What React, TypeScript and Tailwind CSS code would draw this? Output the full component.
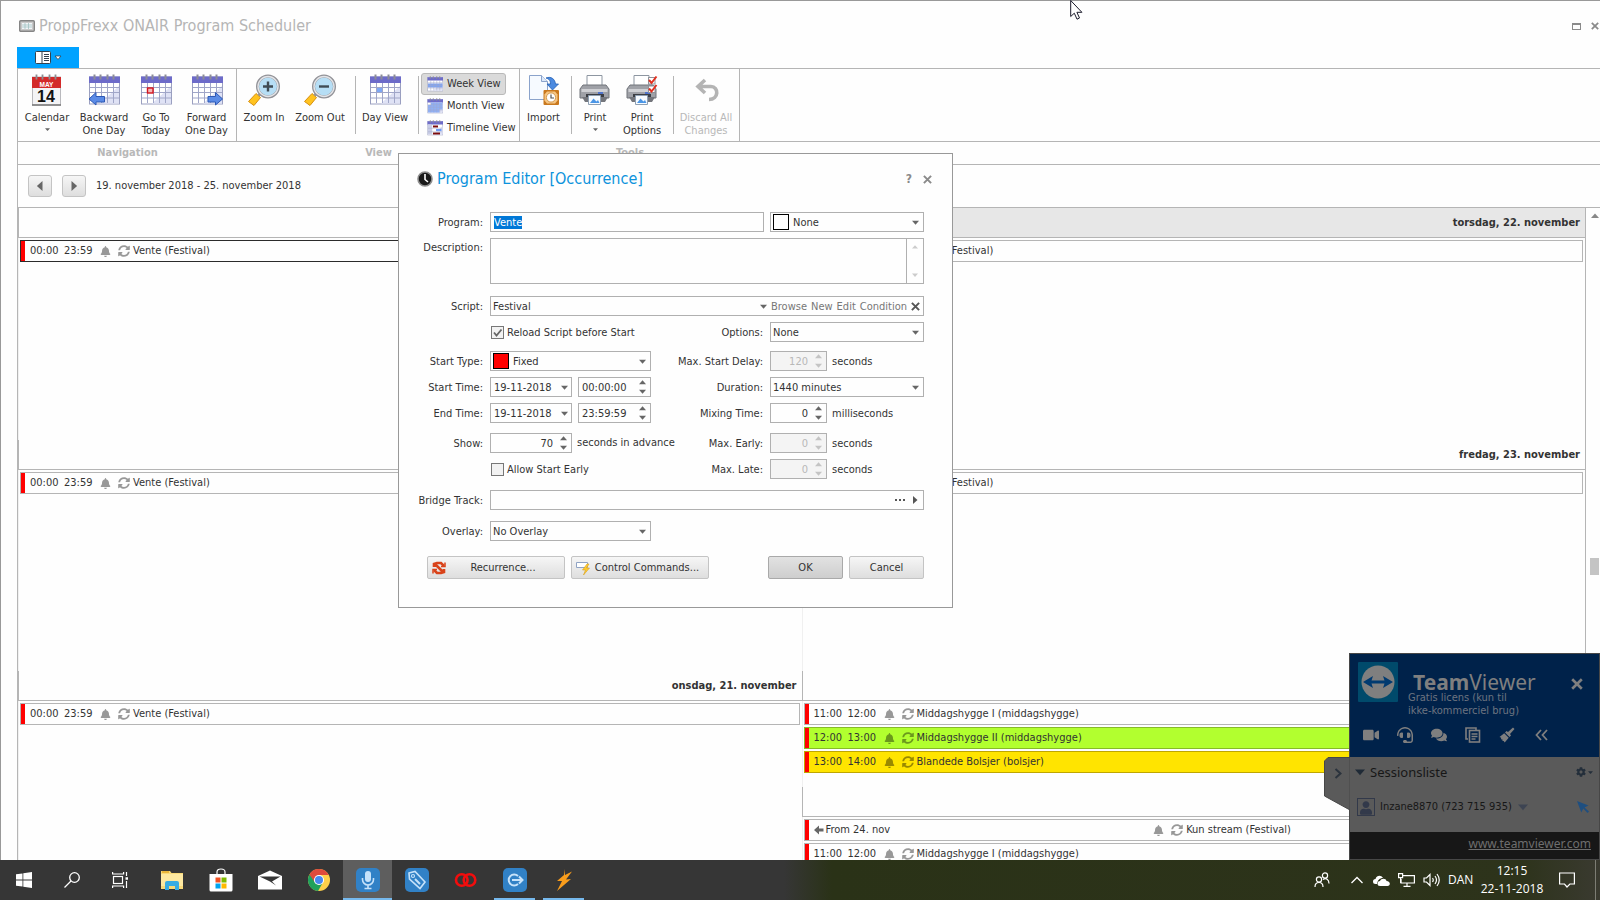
import React, { useEffect, useRef } from 'react';
import { FaBell, FaSyncAlt, FaVideo, FaHeadset, FaComments, FaCog, FaUser } from 'react-icons/fa';

type IconProps = { className?: string };

/* ---------- small glyphs ---------- */

const Caret: React.FC<{ dir?: 'up' | 'down' | 'left' | 'right'; className?: string }> = ({ dir = 'down', className = 'w-[7px] text-[#666]' }) => {
    const points = {
        down: '0,2 8,2 4,6.5',
        up: '0,6 8,6 4,1.5',
        left: '6,0 6,8 1.5,4',
        right: '2,0 2,8 6.5,4',
    };
    return (
        <svg viewBox="0 0 8 8" className={`shrink-0 ${className}`} fill="currentColor">
            <polygon points={points[dir]} />
        </svg>
    );
};

const Cross: React.FC<IconProps> = ({ className = '' }) => (
    <svg viewBox="0 0 10 10" className={`shrink-0 ${className}`} stroke="currentColor" strokeWidth="2.2">
        <path d="M1 1l8 8M9 1l-8 8" />
    </svg>
);

/* ---------- ribbon icons ---------- */

type CalendarKind = 'back' | 'today' | 'forward' | 'day' | 'week' | 'month' | 'timeline';

const CalendarIcon: React.FC<{ kind: CalendarKind; className?: string }> = ({ kind, className = 'w-8 h-8' }) => (
    <svg viewBox="0 0 32 32" className={`shrink-0 ${className}`}>
        <rect x="1.5" y="3" width="30" height="27" fill="#fff" stroke="#9a9fc0" />
        <path d="M12 29.5h19V12z" fill="#dfe2f5" />
        <rect x="1" y="2.5" width="31" height="6.5" fill="#6d6bc9" />
        {kind === 'timeline' ? (
            <g>
                <rect x="2" y="9" width="7" height="20" fill="#c9cde6" />
                <rect x="12" y="11" width="10" height="4" fill="#7d0d0d" />
                <rect x="18" y="18" width="11" height="4" fill="#6f9bf5" />
                <rect x="12" y="25" width="14" height="4" fill="#7d0d0d" />
                <path d="M9.500 9v20M2 16.500h28M2 23.500h28" stroke="#a3a8c8" />
            </g>
        ) : (
            <g>
                {kind === 'day' && <rect x="8" y="14" width="5" height="4.5" fill="#7fa8f5" />}
                {kind === 'week' && <rect x="2" y="15" width="29" height="8" fill="#7fa4f2" />}
                {kind === 'month' && <path d="M8 9h23v14h-6v6H2V14h6z" fill="#8fb0f5" />}
                <path d="M7.500 9v20M13.500 9v20M19.500 9v20M25.500 9v20M2 13.500h29M2 18.500h29M2 24h29" stroke="#a0a6c8" />
            </g>
        )}
        {kind === 'today' && <rect x="7.5" y="14" width="5.5" height="5" fill="#f3b9b9" stroke="#d4141c" strokeWidth="1.4" />}
        {kind === 'back' && <path d="M1 25l7-6.5v4h8.500V28H8v3z" fill="#5b8be6" stroke="#2d58b5" />}
        {kind === 'forward' && <path d="M31.500 25l-7-6.500v4H17V28h7.500v3z" fill="#5b8be6" stroke="#2d58b5" />}
        <path d="M6.500 .5v5M12.500 .5v5M19.500 .5v5M25.500 .5v5" stroke="#8b8b97" strokeWidth="2" />
    </svg>
);

const MayIcon = () => (
    <svg viewBox="0 0 32 32" className="w-8 h-8 shrink-0">
        <rect x="1.5" y="3" width="28" height="28" fill="#f4f4f6" stroke="#b9b9bd" />
        <rect x="1" y="3" width="29" height="11" fill="#d32a2a" />
        <path d="M1 31h29" stroke="#777" strokeWidth="1.5" />
        <path d="M5.500 .5v5M11.500 .5v5M18.500 .5v5M24.500 .5v5" stroke="#8d8d92" strokeWidth="1.8" />
        <text x="15.5" y="12.500" fontSize="6.5" fontWeight="700" textAnchor="middle" fill="#fff" fontFamily="Liberation Sans">MAY</text>
        <text x="15" y="28" fontSize="16" fontWeight="700" textAnchor="middle" fill="#111" fontFamily="Liberation Sans">14</text>
    </svg>
);

const ZoomIcon: React.FC<{ plus?: boolean }> = ({ plus }) => (
    <svg viewBox="0 0 32 32" className="w-8 h-8 shrink-0">
        <path d="M8 19.500l4.500 4-6.500 8-5.500-4z" fill="#ffc31f" stroke="#d68f10" />
        <path d="M10.500 21.500l3-3" stroke="#9a9a9a" strokeWidth="3" />
        <circle cx="20" cy="12.5" r="10.5" fill="#b6def5" stroke="#929297" strokeWidth="3" />
        <circle cx="20" cy="12.5" r="10" fill="none" stroke="#e2e4e8" strokeWidth="1.4" />
        <path d={plus ? 'M15 12.500h10M20 7.500v10' : 'M15 12.500h10'} stroke="#3f4b54" strokeWidth="2.4" />
    </svg>
);

const ImportIcon = () => (
    <svg viewBox="0 0 32 32" className="w-8 h-8 shrink-0">
        <path d="M1.500 1.500h12l6 6v18h-18z" fill="#f6faff" stroke="#8ba3cb" />
        <path d="M13.500 1.500v6h6" fill="#dbe8fa" stroke="#8ba3cb" />
        <path d="M18 4c5-2 9 1 9.500 6h3l-6 6-5.500-6h3.500c0-3-1-5-4.500-6z" fill="#4b8ae0" stroke="#2461b4" strokeWidth=".8" />
        <rect x="15.5" y="16" width="15.500" height="15" rx="1" fill="#c9781d" />
        <path d="M19 17.500h8l2.500 3v6l-2.500 3h-8l-2.500-3v-6z" fill="#f5c583" />
        <circle cx="23" cy="23.5" r="4.6" fill="#fff" stroke="#d59a50" />
        <path d="M23 20.500V24h3" stroke="#555" fill="none" strokeWidth="1.2" />
    </svg>
);

const PrintIcon: React.FC<{ options?: boolean }> = ({ options }) => (
    <svg viewBox="0 0 32 32" className="w-8 h-8 shrink-0">
        <path d="M8 12V1.500h15V12z" fill="#fff" stroke="#8d96a1" />
        <path d="M4 11h23l3 4v9H1v-9z" fill="#9fa1a7" stroke="#71747b" />
        <path d="M2.500 15h26v3h-26z" fill="#cfd0d4" />
        <path d="M3 23h26l-3 5H6z" fill="#74767c" />
        <path d="M7 20h18v3H7z" fill="#3c3e44" />
        <path d="M9.500 21.500h12v9h-12z" fill="#f7fbff" stroke="#8fa0b3" />
        <path d="M11 29l3.500-4.500 3 3 1.500-1.500 1.500 3z" fill="#4b96e6" />
        <path d="M19 19h5" stroke="#3565d6" strokeWidth="1.5" />
        {options && (
            <g>
                <rect x="22.5" y="3.5" width="6.5" height="6.5" fill="#fff" stroke="#8f9299" />
                <rect x="22.5" y="12" width="6.5" height="6.5" fill="#fff" stroke="#8f9299" />
                <path d="M23 6l2.500 3L30.500 2.500M23 14.500l2.500 3 5-6.500" stroke="#e2301f" strokeWidth="2" fill="none" />
            </g>
        )}
    </svg>
);

const UndoIcon = () => (
    <svg viewBox="0 0 32 32" className="w-8 h-8 shrink-0">
        <path d="M15 6L8 12.500l7 6.500M9 12.500h12c8 0 8 13-2 13" fill="none" stroke="#b4b4b4" strokeWidth="3.6" />
    </svg>
);

/* ---------- ribbon ---------- */

interface RibbonItemProps {
    icon: React.ReactNode;
    lines: string[];
    width: string;
    menu?: boolean;
    disabled?: boolean;
}

const RibbonItem: React.FC<RibbonItemProps> = ({ icon, lines, width, menu, disabled }) => (
    <button disabled={disabled} className={`${width} shrink-0 flex flex-col items-center pt-[5px] leading-[13px] ${disabled ? 'text-[#b8b8b8]' : ''}`}>
        {icon}
        <span className="mt-[5px]">
            {lines.map(line => <span key={line} className="block whitespace-nowrap">{line}</span>)}
        </span>
        {menu && <Caret className="w-[5px] mt-[3px] text-[#666]" />}
    </button>
);

const Divider: React.FC<IconProps> = ({ className = '' }) => <div className={`w-px shrink-0 my-[7px] bg-[#b5b5b5] ${className}`} />;

const ViewItem: React.FC<{ kind: CalendarKind; label: string; active?: boolean }> = ({ kind, label, active }) => (
    <button className={`h-[22px] pl-[5px] pr-1 flex items-center gap-1 whitespace-nowrap rounded-[3px] border ${active ? 'bg-[#dadada] border-[#b9b9b9]' : 'border-transparent'}`}>
        <CalendarIcon kind={kind} className="w-4 h-4" />
        {label}
    </button>
);

const RibbonGroup: React.FC<{ caption: string; width: string; children: React.ReactNode }> = ({ caption, width, children }) => (
    <section className={`${width} shrink-0`}>
        <div className="h-[72px] flex border-r border-[#b5b5b5]">{children}</div>
        <h2 className="h-[23px] pt-1 text-center font-bold text-[#b8b8b8]">{caption}</h2>
    </section>
);

const Ribbon = () => (
    <div className="ml-4 shrink-0">
        <button className="w-[62px] h-[21px] bg-[#00a2ff] flex items-center justify-center gap-[3px]" aria-label="File">
            <svg viewBox="0 0 16 13" className="w-4 h-[13px]">
                <rect x=".5" y=".5" width="15" height="12" rx="1" fill="#fff" stroke="#33424e" />
                <path d="M7 0v13" stroke="#33424e" />
                <path d="M9 3.500h5M9 5.500h5M9 7.500h5M9 9.500h5" stroke="#33424e" />
            </svg>
            <svg viewBox="0 0 8 6" className="w-2 h-1.5">
                <path d="M1 1h6L4 4.500z" fill="#fff" stroke="#33424e" strokeWidth=".8" />
            </svg>
        </button>
        <div className="relative border-t border-l border-[#b5b5b5]">
            <div className="absolute left-0 right-0 top-[72px] h-px bg-[#b5b5b5]" />
            <div className="flex">
                <RibbonGroup caption="Navigation" width="w-[219px]">
                    <RibbonItem width="w-[58px]" icon={<MayIcon />} lines={['Calendar']} menu />
                    <RibbonItem width="w-14" icon={<CalendarIcon kind="back" />} lines={['Backward', 'One Day']} />
                    <RibbonItem width="w-12" icon={<CalendarIcon kind="today" />} lines={['Go To', 'Today']} />
                    <RibbonItem width="w-[53px]" icon={<CalendarIcon kind="forward" />} lines={['Forward', 'One Day']} />
                </RibbonGroup>
                <RibbonGroup caption="View" width="w-[283px]">
                    <RibbonItem width="w-[54px]" icon={<ZoomIcon plus />} lines={['Zoom In']} />
                    <RibbonItem width="w-[58px]" icon={<ZoomIcon />} lines={['Zoom Out']} />
                    <Divider className="ml-1.5" />
                    <RibbonItem width="w-[58px]" icon={<CalendarIcon kind="day" />} lines={['Day View']} />
                    <Divider className="ml-1" />
                    <div className="pl-0.5 pt-1 flex flex-col items-start">
                        <ViewItem kind="week" label="Week View" active />
                        <ViewItem kind="month" label="Month View" />
                        <ViewItem kind="timeline" label="Timeline View" />
                    </div>
                </RibbonGroup>
                <RibbonGroup caption="Tools" width="w-[220px]">
                    <RibbonItem width="w-[47px]" icon={<ImportIcon />} lines={['Import']} />
                    <Divider className="ml-1" />
                    <RibbonItem width="w-[46px]" icon={<PrintIcon />} lines={['Print']} menu />
                    <RibbonItem width="w-12" icon={<PrintIcon options />} lines={['Print', 'Options']} />
                    <Divider className="ml-[7px]" />
                    <RibbonItem width="w-[64px]" icon={<UndoIcon />} lines={['Discard All', 'Changes']} disabled />
                </RibbonGroup>
            </div>
        </div>
    </div>
);

/* ---------- calendar ---------- */

interface Appointment {
    start?: string;
    end?: string;
    from?: string;
    title: string;
    tone?: 'plain' | 'green' | 'yellow' | 'selected';
}

const tones = {
    plain: 'border-[#b5b5b5]',
    selected: 'border-[#2b2b2b]',
    green: 'border-[#86bb27] bg-[#b2ff2f]',
    yellow: 'border-[#bfa600] bg-[#ffe400]',
};

const Marks: React.FC<{ title: string }> = ({ title }) => (
    <>
        <FaBell className="w-[11px] h-[11px] text-black/40" />
        <FaSyncAlt className="w-3 h-3 ml-[7px] mr-[3px] text-black/40" />
        <span>{title}</span>
    </>
);

const AppointmentRow: React.FC<Appointment> = ({ start, end, from, title, tone = 'plain' }) => (
    <div className={`h-[22px] shrink-0 flex items-center border whitespace-nowrap ${tones[tone]}`}>
        <div className="w-1 self-stretch bg-[#f00] mr-[5px]" />
        {from ? (
            <>
                <svg viewBox="0 0 10 10" className="w-2.5 h-2.5 mr-0.5" fill="#666"><path d="M0 5l5-4.500v3h4.500v3H5v3z" /></svg>
                <span>{from}</span>
                <div className="flex-1 flex items-center justify-center pr-7"><Marks title={title} /></div>
            </>
        ) : (
            <>
                <span className="w-[34px]">{start}</span>
                <span className="w-9">{end}</span>
                <Marks title={title} />
            </>
        )}
    </div>
);

interface DayProps {
    label?: string;
    height: string;
    today?: boolean;
    items: Appointment[];
}

const DayCell: React.FC<DayProps> = ({ label, height, today, items }) => (
    <section className={`${height} shrink-0 flex flex-col overflow-hidden`}>
        <div className={`h-[30px] shrink-0 border-b border-l border-[#b5b5b5] pr-[5px] flex items-center justify-end ${today ? 'bg-[#e7e7e7]' : ''}`}>
            {label && <h3 className="font-bold">{label}</h3>}
        </div>
        <div className="flex-1 pt-0.5 pl-px pr-0.5 flex flex-col gap-0.5 border-l border-[#f0f0f0]">
            {items.map((item, i) => <AppointmentRow key={i} {...item} />)}
        </div>
    </section>
);

const vente: Appointment = { start: '00:00', end: '23:59', title: 'Vente (Festival)' };
const hygge: Appointment = { start: '11:00', end: '12:00', title: 'Middagshygge I (middagshygge)' };

const leftDays: DayProps[] = [
    { height: 'h-[232px]', items: [{ ...vente, tone: 'selected' }] },
    { height: 'h-[231px]', items: [vente] },
    { label: 'onsdag, 21. november', height: 'h-[232px]', items: [vente] },
];

const rightDays: DayProps[] = [
    { label: 'torsdag, 22. november', height: 'h-[232px]', today: true, items: [vente] },
    { label: 'fredag, 23. november', height: 'h-[231px]', items: [vente] },
    {
        height: 'h-[116px]',
        items: [
            hygge,
            { start: '12:00', end: '13:00', title: 'Middagshygge II (middagshygge)', tone: 'green' },
            { start: '13:00', end: '14:00', title: 'Blandede Bolsjer (bolsjer)', tone: 'yellow' },
        ],
    },
    { height: 'h-[116px]', items: [{ from: 'From 24. nov', title: 'Kun stream (Festival)' }, hygge] },
];

const NavButton: React.FC<{ dir: 'left' | 'right'; label: string }> = ({ dir, label }) => (
    <button aria-label={label} className="w-6 h-[22px] rounded-[3px] border border-[#c4c4c4] bg-linear-to-b from-[#f6f6f6] to-[#dedede] flex items-center justify-center">
        <Caret dir={dir} className="w-2.5 text-[#666]" />
    </button>
);

const Calendar = () => (
    <div className="ml-4 flex-1 min-h-0 flex flex-col border-t border-l border-[#b5b5b5]">
        <div className="h-[43px] shrink-0 flex items-center gap-2.5 pl-2.5 border-b border-[#b5b5b5]">
            <NavButton dir="left" label="Previous week" />
            <NavButton dir="right" label="Next week" />
            <span>19. november 2018 - 25. november 2018</span>
        </div>
        <div className="flex-1 min-h-0 flex overflow-hidden">
            <div className="flex-1 flex flex-col">{leftDays.map((day, i) => <DayCell key={i} {...day} />)}</div>
            <div className="flex-1 flex flex-col">{rightDays.map((day, i) => <DayCell key={i} {...day} />)}</div>
            <div className="w-[15px] shrink-0 border-l border-[#b5b5b5] flex flex-col items-end pt-1 pr-px">
                <Caret dir="up" className="w-2 text-[#888]" />
                <div className="mt-[338px] w-[9px] h-[17px] bg-[#c4c4c4]" />
            </div>
        </div>
    </div>
);

/* ---------- program editor ---------- */

const box = 'h-5 border border-[#b0b0b0] flex items-center';

const Label: React.FC<{ htmlFor: string; right?: boolean; children: React.ReactNode }> = ({ htmlFor, right, children }) => (
    <label htmlFor={htmlFor} className={`shrink-0 pt-0.5 text-right mr-[7px] whitespace-nowrap ${right ? 'w-28' : 'w-[76px]'}`}>{children}</label>
);

const Unit: React.FC<{ children: React.ReactNode }> = ({ children }) => <span className="ml-[5px] pt-0.5 whitespace-nowrap">{children}</span>;

const Combo: React.FC<{ id: string; value: string; width: string; swatch?: string; label?: string }> = ({ id, value, width, swatch, label }) => (
    <div className={`${box} ${width} pl-0.5 pr-1 shrink-0`}>
        {swatch && <span className={`w-4 h-4 shrink-0 border border-black mr-1 ${swatch}`} />}
        <select id={id} aria-label={label} defaultValue={value} className="flex-1 min-w-0 pt-0.5 appearance-none bg-transparent outline-none">
            <option>{value}</option>
        </select>
        <Caret />
    </div>
);

const Spin: React.FC<{ id: string; value: string; width: string; disabled?: boolean; alignRight?: boolean; label?: string }> = ({ id, value, width, disabled, alignRight, label }) => (
    <div className={`${box} ${width} pl-[3px] pr-1 shrink-0 ${disabled ? 'bg-[#f4f4f4] text-[#b8b8b8]' : ''}`}>
        <input id={id} aria-label={label} defaultValue={value} disabled={disabled} className={`flex-1 min-w-0 pt-0.5 outline-none ${alignRight ? 'text-right mr-[7px]' : ''}`} />
        <span className={`flex flex-col gap-0.5 ${disabled ? 'text-[#c4c4c4]' : 'text-[#666]'}`}>
            <Caret dir="up" className="w-[7px]" />
            <Caret className="w-[7px]" />
        </span>
    </div>
);

const DateBox: React.FC<{ id: string }> = ({ id }) => (
    <div className={`${box} w-[82px] pl-[3px] pr-[3px] mr-1.5 shrink-0`}>
        <input id={id} defaultValue="19-11-2018" className="flex-1 min-w-0 pt-0.5 outline-none" />
        <Caret />
    </div>
);

const Check: React.FC<{ label: string; checked?: boolean }> = ({ label, checked }) => (
    <label className="w-40 shrink-0 ml-[84px] flex items-center gap-[3px] whitespace-nowrap">
        <span className="relative flex shrink-0">
            <input type="checkbox" defaultChecked={checked} className="peer appearance-none w-[13px] h-[13px] border border-[#777] bg-[#f2f2f2]" />
            <svg viewBox="0 0 13 13" className="absolute inset-0 hidden peer-checked:block" fill="none" stroke="#666" strokeWidth="1.8">
                <path d="M3 6.500l2.500 3 5-6" />
            </svg>
        </span>
        <span className="pt-0.5">{label}</span>
    </label>
);

const DialogButton: React.FC<{ width: string; icon?: React.ReactNode; primary?: boolean; children: React.ReactNode }> = ({ width, icon, primary, children }) => (
    <button className={`${width} h-[23px] shrink-0 rounded-[2px] border px-1 flex items-center bg-linear-to-b ${primary ? 'border-[#a9a9a9] from-[#e2e2e2] to-[#cecece]' : 'border-[#c4c4c4] from-[#f6f6f6] to-[#dedede]'}`}>
        {icon}
        <span className="flex-1 pt-px text-center">{children}</span>
    </button>
);

const ProgramEditor = () => {
    const programRef = useRef<HTMLInputElement>(null);

    // The name is preselected so it can be typed over
    useEffect(() => {
        programRef.current?.focus();
        programRef.current?.select();
    }, []);

    return (
        <div role="dialog" aria-label="Program Editor" className="absolute left-[398px] top-[153px] w-[555px] pl-2 pr-5 pb-7 bg-[#fefefe] border border-[#999]">
            <header className="h-[50px] ml-2.5 flex items-center">
                <svg viewBox="0 0 16 16" className="w-4 h-4 mr-1">
                    <circle cx="8" cy="8" r="7" fill="#1a1a1a" stroke="#8d8d8d" strokeWidth="1.6" />
                    <path d="M8 3v5.500l3 2.500" stroke="#fff" strokeWidth="1.6" fill="none" />
                </svg>
                <h1 className="flex-1 text-[16px] text-[#0c93dc]">Program Editor [Occurrence]</h1>
                <button className="font-bold text-[12px] text-[#8a8a8a] mr-[11px]" aria-label="Help">?</button>
                <button aria-label="Close"><Cross className="w-[9px] text-[#8a8a8a]" /></button>
            </header>

            <div className="mt-2 flex items-center">
                <Label htmlFor="program">Program:</Label>
                <input id="program" ref={programRef} defaultValue="Vente" className="w-[274px] h-5 mr-1.5 px-[3px] pt-px border border-[#b0b0b0] outline-none selection:bg-[#0078d7] selection:text-white" />
                <Combo id="color" label="Color" value="None" width="w-[154px]" swatch="bg-white" />
            </div>
            <div className="mt-1.5 flex items-start">
                <Label htmlFor="description">Description:</Label>
                <div className="w-[434px] h-[46px] border border-[#b0b0b0] flex">
                    <textarea id="description" className="flex-1 resize-none outline-none" />
                    <div className="w-[17px] border-l border-[#b0b0b0] py-[5px] flex flex-col items-center justify-between text-[#ccc]">
                        <Caret dir="up" className="w-1.5" />
                        <Caret className="w-1.5" />
                    </div>
                </div>
            </div>
            <div className="mt-3 flex items-center">
                <Label htmlFor="script">Script:</Label>
                <div className={`${box} w-[434px] pl-0.5 pr-[3px]`}>
                    <select id="script" className="flex-1 pt-0.5 appearance-none outline-none"><option>Festival</option></select>
                    <Caret />
                    <div className="ml-1 flex items-center gap-1 text-[#777]">
                        <button className="pt-0.5">Browse</button>
                        <button className="pt-0.5">New</button>
                        <button className="pt-0.5">Edit</button>
                        <button className="pt-0.5">Condition</button>
                        <button aria-label="Clear"><Cross className="w-[9px] text-[#555]" /></button>
                    </div>
                </div>
            </div>
            <div className="mt-1.5 flex items-center">
                <Check label="Reload Script before Start" checked />
                <Label htmlFor="options" right>Options:</Label>
                <Combo id="options" value="None" width="w-[154px]" />
            </div>
            <div className="mt-[9px] flex items-center">
                <Label htmlFor="startType">Start Type:</Label>
                <Combo id="startType" value="Fixed" width="w-[161px]" swatch="bg-[#f00]" />
                <Label htmlFor="maxDelay" right>Max. Start Delay:</Label>
                <Spin id="maxDelay" value="120" width="w-[57px]" disabled alignRight />
                <Unit>seconds</Unit>
            </div>
            <div className="mt-1.5 flex items-center">
                <Label htmlFor="startDate">Start Time:</Label>
                <DateBox id="startDate" />
                <Spin id="startTime" label="Start clock" value="00:00:00" width="w-[73px]" />
                <Label htmlFor="duration" right>Duration:</Label>
                <Combo id="duration" value="1440 minutes" width="w-[154px]" />
            </div>
            <div className="mt-1.5 flex items-center">
                <Label htmlFor="endDate">End Time:</Label>
                <DateBox id="endDate" />
                <Spin id="endTime" label="End clock" value="23:59:59" width="w-[73px]" />
                <Label htmlFor="mixing" right>Mixing Time:</Label>
                <Spin id="mixing" value="0" width="w-[57px]" alignRight />
                <Unit>milliseconds</Unit>
            </div>
            <div className="mt-2.5 flex items-center">
                <Label htmlFor="show">Show:</Label>
                <Spin id="show" value="70" width="w-[82px]" alignRight />
                <div className="w-[79px]"><Unit>seconds in advance</Unit></div>
                <Label htmlFor="maxEarly" right>Max. Early:</Label>
                <Spin id="maxEarly" value="0" width="w-[57px]" disabled alignRight />
                <Unit>seconds</Unit>
            </div>
            <div className="mt-1.5 flex items-center">
                <Check label="Allow Start Early" />
                <Label htmlFor="maxLate" right>Max. Late:</Label>
                <Spin id="maxLate" value="0" width="w-[57px]" disabled alignRight />
                <Unit>seconds</Unit>
            </div>
            <div className="mt-[11px] flex items-center">
                <Label htmlFor="bridge">Bridge Track:</Label>
                <div className={`${box} w-[434px] pr-1`}>
                    <input id="bridge" className="flex-1 outline-none" />
                    <button aria-label="Pick track" className="flex gap-0.5 mr-1.5">
                        <i className="size-0.5 bg-[#555]" /><i className="size-0.5 bg-[#555]" /><i className="size-0.5 bg-[#555]" />
                    </button>
                    <button aria-label="Play"><Caret dir="right" className="w-2 text-[#555]" /></button>
                </div>
            </div>
            <div className="mt-[11px] flex items-center">
                <Label htmlFor="overlay">Overlay:</Label>
                <Combo id="overlay" value="No Overlay" width="w-[161px]" />
            </div>
            <footer className="mt-[15px] ml-5 mr-2 flex gap-1.5">
                <DialogButton width="w-[138px]" icon={
                    <svg viewBox="0 0 14 14" className="w-3.5 h-3.5" fill="none" stroke="#d9431a" strokeWidth="2.6">
                        <path d="M2 6V3l3-1h4l3 3M12 8v3l-3 1H5L2 9M3 3l8 8" />
                        <path d="M9 5.500h4v-4M5 8.500H1v4" strokeWidth="1.5" />
                    </svg>
                }>Recurrence...</DialogButton>
                <DialogButton width="w-[138px]" icon={
                    <svg viewBox="0 0 14 14" className="w-3.5 h-3.5">
                        <path d="M.5 1.500h11v5H.5z" fill="#fff" stroke="#8fa3c4" />
                        <path d="M11 3L6.500 9h3l-2 5 6-7h-3l2.500-4z" fill="#ffcb30" stroke="#d9a11c" strokeWidth=".6" />
                    </svg>
                }>Control Commands...</DialogButton>
                <div className="flex-1" />
                <DialogButton width="w-[75px]" primary>OK</DialogButton>
                <DialogButton width="w-[75px]">Cancel</DialogButton>
            </footer>
        </div>
    );
};

/* ---------- TeamViewer panel ---------- */

const TeamViewer = () => (
    <aside className="absolute right-0 bottom-10 w-[251px] border border-[#474747]">
        <svg viewBox="0 0 26 54" className="absolute right-full top-[103px] w-[26px] h-[54px]">
            <path d="M26 .5H4L.5 4v35L26 53z" fill="#5a5a5a" stroke="#474747" />
            <path d="M11.500 12l5 4.500-5 4.500" fill="none" stroke="#2b333d" strokeWidth="2" />
        </svg>
        <div className="h-[103px] bg-[#00224a] text-[#7f7f7f] pt-2 px-2">
            <div className="h-[55px] flex">
                <svg viewBox="0 0 40 40" className="w-10 h-10 shrink-0">
                    <rect width="40" height="40" rx="1" fill="#004a6b" />
                    <circle cx="20" cy="20" r="16.5" fill="#7f7f7f" />
                    <path d="M5 20l10-6-1.500 4.500h13L25 14l10 6-10 6 1.500-4.500h-13L15 26z" fill="#003a70" />
                </svg>
                <div className="ml-2.5 flex-1">
                    <div className="pl-[5px] pt-3 text-[21px] leading-[17px] font-['Noto_Sans',sans-serif]"><b>Team</b>Viewer</div>
                    <p className="text-[11px] leading-[13px] text-[#6d7480]">Gratis licens (kun til<br />ikke-kommerciel brug)</p>
                </div>
                <button aria-label="Close panel" className="self-start mt-4 mr-2"><Cross className="w-3" /></button>
            </div>
            <div className="mt-2.5 ml-[5px] flex items-center gap-[18px] text-[16px]">
                <FaVideo />
                <FaHeadset />
                <FaComments />
                <svg viewBox="0 0 16 16" className="w-4 h-4" fill="none" stroke="currentColor" strokeWidth="1.6">
                    <path d="M3 12H1V1h10v2" /><rect x="4.5" y="3.5" width="10" height="11.5" /><path d="M6.500 7h6M6.500 9.500h6M6.500 12h4" />
                </svg>
                <svg viewBox="0 0 16 16" className="w-4 h-4" fill="currentColor">
                    <path d="M14 .5l1.500 1.500-4.500 5 1 1.500-1.500 1.500L6 5.500 7.500 4 9 5z" /><path d="M5.200 6.300l4.500 4.500-4 4.700-1-1.500-1.200 0 0-1.500-1.500-.3.200-1.500L.5 10z" />
                </svg>
                <svg viewBox="0 0 16 16" className="w-4 h-4" fill="none" stroke="currentColor" strokeWidth="1.8">
                    <path d="M8 3L3.500 8 8 13M14 3L9.500 8l4.500 5" />
                </svg>
            </div>
        </div>
        <div className="h-[75px] bg-[#5a5a5a] text-[#171717]">
            <div className="h-[30px] flex items-center pl-[5px] pr-1.5">
                <Caret className="w-2.5 text-[#1f2a36]" />
                <span className="flex-1 ml-[5px] text-[13px] font-['Noto_Sans',sans-serif]">Sessionsliste</span>
                <FaCog className="w-2.5 h-2.5 mr-0.5 text-[#232e3a]" />
                <Caret className="w-[5px] text-[#232e3a]" />
            </div>
            <div className="mt-[11px] flex items-center pl-[7px] pr-2.5">
                <span className="w-[18px] h-[18px] border border-[#32394a] flex items-end justify-center"><FaUser className="w-3 h-3.5 text-[#32394a]" /></span>
                <span className="ml-[5px]">Inzane8870 (723 715 935)</span>
                <Caret className="w-2.5 ml-1.5 text-[#3d4452]" />
                <svg viewBox="0 0 12 12" className="w-3 h-3 ml-auto" fill="#1f4f80"><path d="M0 0l11.500 4.500-4 2 4.500 4-1.500 1.500-4.200-4.500-2 4z" /></svg>
            </div>
        </div>
        <div className="h-[27px] bg-[#171717] text-right pr-2 pt-1 font-['Noto_Sans',sans-serif]">
            <a href="#teamviewer" className="text-[12px] text-[#6e6e6e] underline">www.teamviewer.com</a>
        </div>
    </aside>
);

/* ---------- taskbar ---------- */

const TaskButton: React.FC<{ label: string; state?: 'active' | 'running'; wide?: boolean; children: React.ReactNode }> = ({ label, state, wide = true, children }) => (
    <button aria-label={label} className={`${wide ? 'w-[49px]' : 'w-12'} h-10 relative flex items-center justify-center ${state === 'active' ? 'bg-[#5e5e5e]' : ''}`}>
        {children}
        {state && <span className={`absolute bottom-0 h-0.5 bg-[#76b9ed] ${state === 'active' ? 'inset-x-0' : 'inset-x-1'}`} />}
    </button>
);

const BlueTile: React.FC<{ children: React.ReactNode }> = ({ children }) => (
    <svg viewBox="0 0 24 24" className="w-6 h-6" fill="none" stroke="#c6e2fa" strokeWidth="2">
        <rect width="24" height="24" rx="5" fill="#3181c6" stroke="none" />
        {children}
    </svg>
);

const Taskbar = () => (
    <footer className="h-10 shrink-0 flex text-white bg-[linear-gradient(90deg,#363636_49%,#2a3217_52%,#2d331b_95%,#3a3a30)] font-['Open_Sans',sans-serif]">
        <TaskButton label="Start" wide={false}>
            <svg viewBox="0 0 16 16" className="w-4 h-4" fill="#fff">
                <path d="M0 2.300l6.500-.9v6.200H0zM7.300 1.300L16 0v7.600H7.300zM0 8.400h6.500v6.200L0 13.700zM7.300 8.400H16V16l-8.700-1.200z" />
            </svg>
        </TaskButton>
        <TaskButton label="Search" wide={false}>
            <svg viewBox="0 0 16 16" className="w-4 h-4" fill="none" stroke="#fff" strokeWidth="1.3">
                <circle cx="10.5" cy="5.5" r="4.8" /><path d="M7 9L.5 15.500" />
            </svg>
        </TaskButton>
        <TaskButton label="Task view" wide={false}>
            <svg viewBox="0 0 16 16" className="w-4 h-4" fill="none" stroke="#fff" strokeWidth="1.2">
                <rect x="1.5" y="4.5" width="9" height="7" /><path d="M.6 0v2h11V0M.6 16v-2h11v2M14.500 0v4M14.500 9v7" /><path d="M13.500 6.500H16" strokeWidth="2.5" />
            </svg>
        </TaskButton>
        <div className="w-[3px]" />
        <TaskButton label="File Explorer">
            <svg viewBox="0 0 22 20" className="w-[22px] h-5">
                <path d="M0 1h9l1.500 2H22v16H0z" fill="#f8d978" />
                <path d="M0 4h22v12H0z" fill="#fde8a0" /><path d="M1 1h7v2H1z" fill="#e9b53a" />
                <path d="M4 20v-7q0-2 2-2h10q2 0 2 2v7h-4v-4H8v4z" fill="#37ace3" />
            </svg>
        </TaskButton>
        <TaskButton label="Store">
            <svg viewBox="0 0 24 24" className="w-6 h-6">
                <path d="M8 7V4q0-3 4-3t4 3v3" fill="none" stroke="#fff" strokeWidth="1.2" />
                <path d="M.5 6h23v16q0 1.500-1.500 1.500H2Q.5 23.500.5 22z" fill="#fff" />
                <path d="M6.500 9.500h5v5h-5z" fill="#f25022" /><path d="M12.500 9.500h5v5h-5z" fill="#7fba00" />
                <path d="M6.500 15.500h5v5h-5z" fill="#00a4ef" /><path d="M12.500 15.500h5v5h-5z" fill="#ffb900" />
            </svg>
        </TaskButton>
        <TaskButton label="Mail">
            <svg viewBox="0 0 24 20" className="w-6 h-5">
                <path d="M0 6L12 .5 24 6v13.500H0z" fill="#fff" /><path d="M1.500 6.500h21L14 11.500l4 4-6-4z" fill="#363636" />
            </svg>
        </TaskButton>
        <TaskButton label="Chrome">
            <svg viewBox="0 0 24 24" className="w-[22px] h-[22px]">
                <circle cx="12" cy="12" r="12" fill="#fdd04a" />
                <path d="M12 12L1.600 6A12 12 0 0 0 11 24l5-9z" fill="#1fa15d" />
                <path d="M1.600 6a12 12 0 0 1 21 .5H12L7 14z" fill="#de4a3c" />
                <circle cx="12" cy="12" r="5.5" fill="#fff" /><circle cx="12" cy="12" r="4.4" fill="#4788f0" />
            </svg>
        </TaskButton>
        <TaskButton label="Voice" state="active">
            <BlueTile>
                <rect x="9" y="3" width="6" height="11" rx="3" fill="#c6e2fa" stroke="none" /><path d="M6.500 10v1.500a5.500 5.500 0 0 0 11 0V10M12 17v3M8.500 20.500h7" strokeWidth="1.6" />
            </BlueTile>
        </TaskButton>
        <TaskButton label="Tags">
            <BlueTile>
                <path d="M4 5l6-1.500L20 14l-5 6.500L4.500 11z" strokeWidth="1.6" /><circle cx="8" cy="8" r="1.5" strokeWidth="1.2" /><path d="M10 11l5 5" />
            </BlueTile>
        </TaskButton>
        <TaskButton label="Rings">
            <svg viewBox="0 0 24 16" className="w-6 h-4" fill="none" stroke="#f20d0d" strokeWidth="2.6">
                <circle cx="7.8" cy="8" r="5.8" /><circle cx="15.5" cy="8" r="5.8" />
            </svg>
        </TaskButton>
        <TaskButton label="Forward" state="running">
            <BlueTile><path d="M15 8a5.500 5.500 0 1 0 0 8M9 12h10M16 8.500l3.500 3.500-3.500 3.500" /></BlueTile>
        </TaskButton>
        <TaskButton label="Winamp" state="running">
            <svg viewBox="0 0 18 24" className="w-[18px] h-6">
                <path d="M9.500 1l-.5 6-7 6h5l-5 10L16 11l-5 .5 6-8L10 7z" fill="#f99d1c" />
            </svg>
        </TaskButton>

        <div className="ml-auto flex items-center">
            <svg viewBox="0 0 16 16" className="w-4 h-4 mr-[21px]" fill="none" stroke="#fff" strokeWidth="1.2">
                <circle cx="5" cy="7.5" r="2.6" /><path d="M1 15c0-6 8-6 8 0" /><circle cx="11" cy="3.5" r="2.6" /><path d="M9 7.500c3-2 6 0 6 4" />
            </svg>
            <svg viewBox="0 0 12 8" className="w-3 h-2 mr-2.5" fill="none" stroke="#fff" strokeWidth="1.3"><path d="M.5 7L6 1.500 11.500 7" /></svg>
            <svg viewBox="0 0 17 11" className="w-[17px] h-[11px] mr-2" fill="#fff">
                <path d="M4 9H2.500a2.500 2.500 0 0 1 0-5C3.500.5 8-.5 10 3 7 3 4.500 5 4 9z" /><path d="M7 11a2.500 2.500 0 0 1 0-5c1-3 6-3 6.500 0 4 0 4.500 5 1 5z" />
            </svg>
            <svg viewBox="0 0 17 14" className="w-[17px] h-3.5 mr-2" fill="none" stroke="#fff" strokeWidth="1.2">
                <path d="M5 2.600h11.400V10H3V6M9 10v3M5.500 13.400h7" /><path d="M.6.6h4v4h-4zM2.600 5v5" />
            </svg>
            <svg viewBox="0 0 17 14" className="w-[17px] h-3.5 mr-2" fill="none" stroke="#fff" strokeWidth="1.2">
                <path d="M1 5h2.500L7 1.500v11L3.500 9H1zM9.500 5q1.500 2 0 4M12 3q3 4 0 8M14 1q4.500 6 0 12" />
            </svg>
            <span className="text-[12px] w-[37px]">DAN</span>
            <time className="w-[54px] text-[12px] leading-[18px] text-center flex flex-col items-center whitespace-nowrap"><span>12:15</span><span>22-11-2018</span></time>
            <svg viewBox="0 0 16 16" className="w-4 h-4 ml-5 mr-5" fill="none" stroke="#fff" strokeWidth="1.2">
                <path d="M.6 1h14.800v11h-4.500L8 15l-2.500-3H.6z" />
            </svg>
            <div className="w-px h-full bg-[#7d7d74] mr-1" />
        </div>
    </footer>
);

export default function App() {
    return (
        <div className="relative h-screen flex flex-col overflow-hidden bg-[#fefefe] text-[11px] leading-4 text-[#333] font-['DejaVu_Sans_Condensed',Tahoma,sans-serif]">
            <main className="flex-1 min-h-0 flex flex-col border-t border-l border-[#999]">
                <header className="h-[46px] shrink-0 pl-[18px] pr-px flex items-center text-[#b5b5b5]">
                    <svg viewBox="0 0 16 12" className="w-4 h-3 mr-1 mt-1">
                        <rect x=".7" y=".7" width="14.600" height="10.600" rx="1" fill="#c9c9c9" stroke="#858585" strokeWidth="1.4" />
                        <rect x="3" y="3" width="10" height="6" fill="#f2f5f8" /><path d="M3 5h10M3 7h10M6 3v6M9.500 3v6" stroke="#9bb" strokeWidth=".7" />
                    </svg>
                    <h1 className="flex-1 text-[16px] leading-6 mt-1">ProppFrexx ONAIR Program Scheduler</h1>
                    <button aria-label="Maximize" className="w-[9px] h-[7px] mr-2.5 mt-1 border border-t-2 border-[#8a8a8a]" />
                    <button aria-label="Close window"><Cross className="w-2 mt-1 text-[#8a8a8a]" /></button>
                </header>
                <Ribbon />
                <Calendar />
            </main>
            <Taskbar />
            <ProgramEditor />
            <TeamViewer />
            <svg viewBox="0 0 13 20" className="absolute left-[1070px] top-0 w-[13px] h-5">
                <path d="M.7.500v16L4.300 13.200l2.700 6L9.500 18l-2.600-5.700h5z" fill="#fff" stroke="#1a1a2a" />
            </svg>
        </div>
    );
}
